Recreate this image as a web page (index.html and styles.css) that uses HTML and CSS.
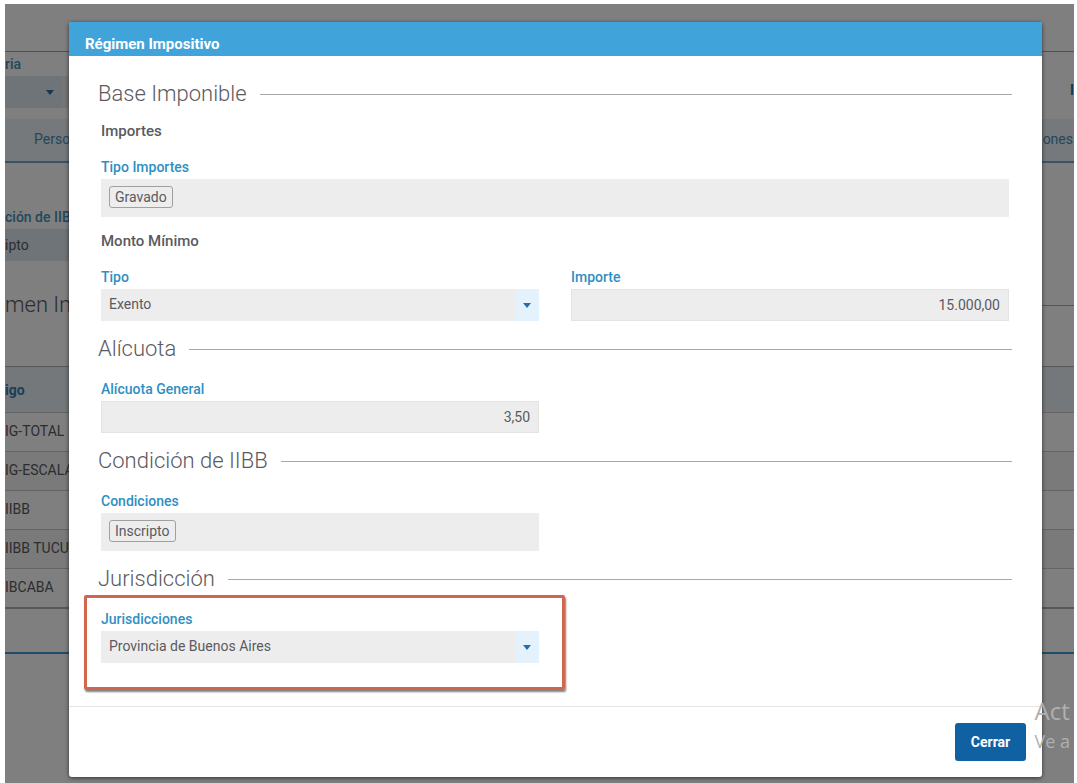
FILE: index.html
```html
<!DOCTYPE html>
<html lang="es">
<head>
    <meta charset="UTF-8">
    <title>Régimen Impositivo</title>
    <meta name="viewport" content="width=device-width,initial-scale=1">
    <link rel="stylesheet" href="styles.css">
</head>
<body>
    <div class="screen">
        <!-- Page behind the dialog -->
        <main class="page" inert>
            <div class="topbar"></div>
            <div class="filter-row">
                <div>
                    <label class="page-label" for="filtro">ria</label>
                    <div class="page-select">
                        <select id="filtro"><option></option></select>
                    </div>
                </div>
                <span class="filter-more">I</span>
            </div>
            <nav class="tabs">
                <a href="#">Perso</a>
                <a href="#">ones</a>
            </nav>
            <div class="page-field">
                <label class="page-label" for="condicion">ción de IIB</label>
                <input class="page-input" id="condicion" type="text" value="ipto" readonly>
            </div>
            <h2 class="page-heading">men Im</h2>
            <table class="page-table">
                <thead>
                    <tr><th>igo</th></tr>
                </thead>
                <tbody>
                    <tr><td>IG-TOTAL</td></tr>
                    <tr><td>IG-ESCALA</td></tr>
                    <tr><td>IIBB</td></tr>
                    <tr><td>IIBB TUCU</td></tr>
                    <tr><td>IBCABA</td></tr>
                </tbody>
            </table>
            <div class="page-end"></div>
        </main>

        <div class="overlay">
            <div class="modal" role="dialog" aria-labelledby="modalTitle">
                <header class="modal-header" id="modalTitle">Régimen Impositivo</header>

                <div class="modal-body">
                    <h2 class="section-title">Base Imponible</h2>
                    <h3 class="subtitle">Importes</h3>
                    <div class="row full">
                        <div class="field">
                            <span class="label" id="tipoImportes">Tipo Importes</span>
                            <div class="chips" role="group" aria-labelledby="tipoImportes">
                                <span class="chip">Gravado</span>
                            </div>
                        </div>
                    </div>

                    <h3 class="subtitle">Monto Mínimo</h3>
                    <div class="row">
                        <div class="field">
                            <label class="label" for="tipo">Tipo</label>
                            <div class="select-box">
                                <select id="tipo"><option>Exento</option></select>
                            </div>
                        </div>
                        <div class="field">
                            <label class="label" for="importe">Importe</label>
                            <input class="number" id="importe" type="text" value="15.000,00" readonly>
                        </div>
                    </div>

                    <h2 class="section-title">Alícuota</h2>
                    <div class="row">
                        <div class="field">
                            <label class="label" for="alicuota">Alícuota General</label>
                            <input class="number" id="alicuota" type="text" value="3,50" readonly>
                        </div>
                    </div>

                    <h2 class="section-title">Condición de IIBB</h2>
                    <div class="row">
                        <div class="field">
                            <span class="label" id="condiciones">Condiciones</span>
                            <div class="chips" role="group" aria-labelledby="condiciones">
                                <span class="chip">Inscripto</span>
                            </div>
                        </div>
                    </div>

                    <h2 class="section-title">Jurisdicción</h2>
                    <div class="row">
                        <div class="field highlight">
                            <label class="label" for="jurisdicciones">Jurisdicciones</label>
                            <div class="select-box">
                                <select id="jurisdicciones"><option>Provincia de Buenos Aires</option></select>
                            </div>
                        </div>
                    </div>
                </div>

                <footer class="modal-footer">
                    <button class="close-btn" type="button">Cerrar</button>
                </footer>
            </div>
        </div>

        <div class="watermark">
            <div class="watermark-title">Act</div>
            <div class="watermark-text">Ve a</div>
        </div>
    </div>
</body>
</html>
```
FILE: styles.css
```css
* {
    margin: 0;
    padding: 0;
    box-sizing: border-box;
}

body {
    font-family: Roboto, "Liberation Sans", sans-serif;
    font-size: 14px;
    color: #5a5a60;
    background: #fff;
    padding: 4px 3px 0 5px;
}

input, select, button {
    font: inherit;
    color: inherit;
    border: none;
}

select {
    appearance: none;
}

.screen {
    position: relative;
    min-height: calc(100vh - 4px);
    overflow: hidden;
}

/* Page behind the dialog */
.topbar {
    height: 48px;
    border-bottom: 1px solid #a0a0a0;
}

.page-label {
    display: block;
    line-height: 24px;
    font-weight: 500;
    color: #4590b8;
}

.filter-row {
    display: flex;
    justify-content: space-between;
    align-items: flex-start;
    height: 67px;
}

.page-select {
    position: relative;
    width: 80px;
    background: linear-gradient(#dde8ef, #dde8ef) left / 56px 100% no-repeat #ebebeb;
}

.page-select select {
    display: block;
    width: 100%;
    height: 32px;
    background: transparent;
}

.page-select::after,
.select-box::after {
    content: "";
    position: absolute;
    top: 14px;
    right: 8px;
    border: 4px solid transparent;
    border-top: 5px solid #2b6ca8;
    border-bottom: none;
}

.page-select::after {
    right: 31px;
}

.filter-more {
    padding-top: 30px;
    font-weight: 700;
    color: #2b6ca8;
}

.tabs {
    display: flex;
    justify-content: space-between;
    height: 44px;
    padding: 0 1px 0 29px;
    line-height: 40px;
    background: #edf2f6;
    border-bottom: 2px solid #6fa8c8;
}

.tabs a {
    color: #4590b8;
    text-decoration: none;
}

.page-field {
    padding-top: 42px;
}

.page-input {
    display: block;
    width: 100px;
    height: 32px;
    background: #dde8ef;
}

.page-heading,
.section-title {
    display: flex;
    align-items: center;
    gap: 13px;
    font-size: 22px;
    font-weight: 300;
    line-height: 30px;
}

.page-heading {
    margin: 29px 0 46px;
}

.page-heading::after,
.section-title::after {
    content: "";
    flex: 1;
    border-top: 1px solid #a9a9a9;
}

.page-table {
    width: 100%;
    border-collapse: collapse;
    border-top: 1px solid #b0b0b0;
    border-bottom: 2px solid #b0b0b0;
}

.page-table th {
    height: 46px;
    font-weight: 700;
    text-align: left;
    color: #3480ac;
    background: #e8f0f5;
}

.page-table td {
    height: 39px;
    padding-bottom: 2px;
    border-top: 1px solid #c8c8c8;
}

.page-table tr:nth-child(even) {
    background: #f5f5f5;
}

.page-end {
    height: 45px;
    border-bottom: 2px solid #3f9fd0;
}

/* Dialog */
.overlay {
    position: absolute;
    inset: 0;
    padding: 18px 32px 6px 64px;
    background: rgba(0,0,0,0.5);
}

.modal {
    background: #fff;
    border-radius: 3px;
    box-shadow: 0 1px 4px rgba(0,0,0,0.6);
}

.modal-header {
    padding: 10px 16px 0;
    font-size: 15px;
    font-weight: 700;
    line-height: 24px;
    color: #fff;
    background: #40a4da;
    border-radius: 2px 2px 0 0;
}

.modal-body {
    padding: 23px 30px 43px 29px;
}

.section-title {
    margin-bottom: 15px;
}

.subtitle {
    margin: 0 3px 19px;
    font-size: 15px;
    font-weight: 500;
    line-height: 14px;
}

.row + .subtitle {
    margin-top: 17px;
}

.row {
    display: grid;
    grid-template-columns: 1fr 1fr;
    gap: 32px;
    margin: 0 3px 13px;
}

.row.full {
    grid-template-columns: 1fr;
}

.row:last-child {
    margin-bottom: 0;
}

.label {
    display: block;
    margin-bottom: 2px;
    font-weight: 500;
    line-height: 20px;
    color: #2f8fc2;
}

.chips {
    display: flex;
    align-items: flex-start;
    height: 38px;
    padding: 7px 8px;
    background: #ededed;
}

.chip {
    padding: 0 5px;
    line-height: 20px;
    border: 1px solid #a0a0a0;
    border-radius: 3px;
}

.select-box {
    position: relative;
}

.select-box select {
    display: block;
    width: 100%;
    height: 32px;
    padding: 0 31px 2px 8px;
    background: linear-gradient(#e3f2fd, #e3f2fd) right / 23px 100% no-repeat #ededed;
}

.number {
    display: block;
    width: 100%;
    height: 32px;
    padding: 0 8px;
    text-align: right;
    background: #ededed;
    border: 1px solid #e3e3e3;
}

.highlight {
    position: relative;
}

.highlight::after {
    content: "";
    position: absolute;
    inset: -14px -26px -27px -17px;
    border: 3px solid #d0664e;
    border-radius: 2px;
    box-shadow: 1px 2px 2px rgba(0,0,0,0.5);
    pointer-events: none;
}

.modal-footer {
    display: flex;
    justify-content: flex-end;
    padding: 16px;
    border-top: 1px solid #e4e4e4;
}

.close-btn {
    width: 71px;
    height: 38px;
    font-weight: 700;
    color: #fff;
    background: #1061a2;
    border-radius: 3px;
    cursor: pointer;
}

/* Windows activation notice, over everything */
.watermark {
    position: absolute;
    right: 4px;
    bottom: 27px;
    font-family: "Open Sans", "Noto Sans", sans-serif;
    color: #b0b0b0;
}

.watermark-title {
    font-size: 24px;
    line-height: 30px;
}

.watermark-text {
    font-size: 18px;
    line-height: 30px;
}
```
